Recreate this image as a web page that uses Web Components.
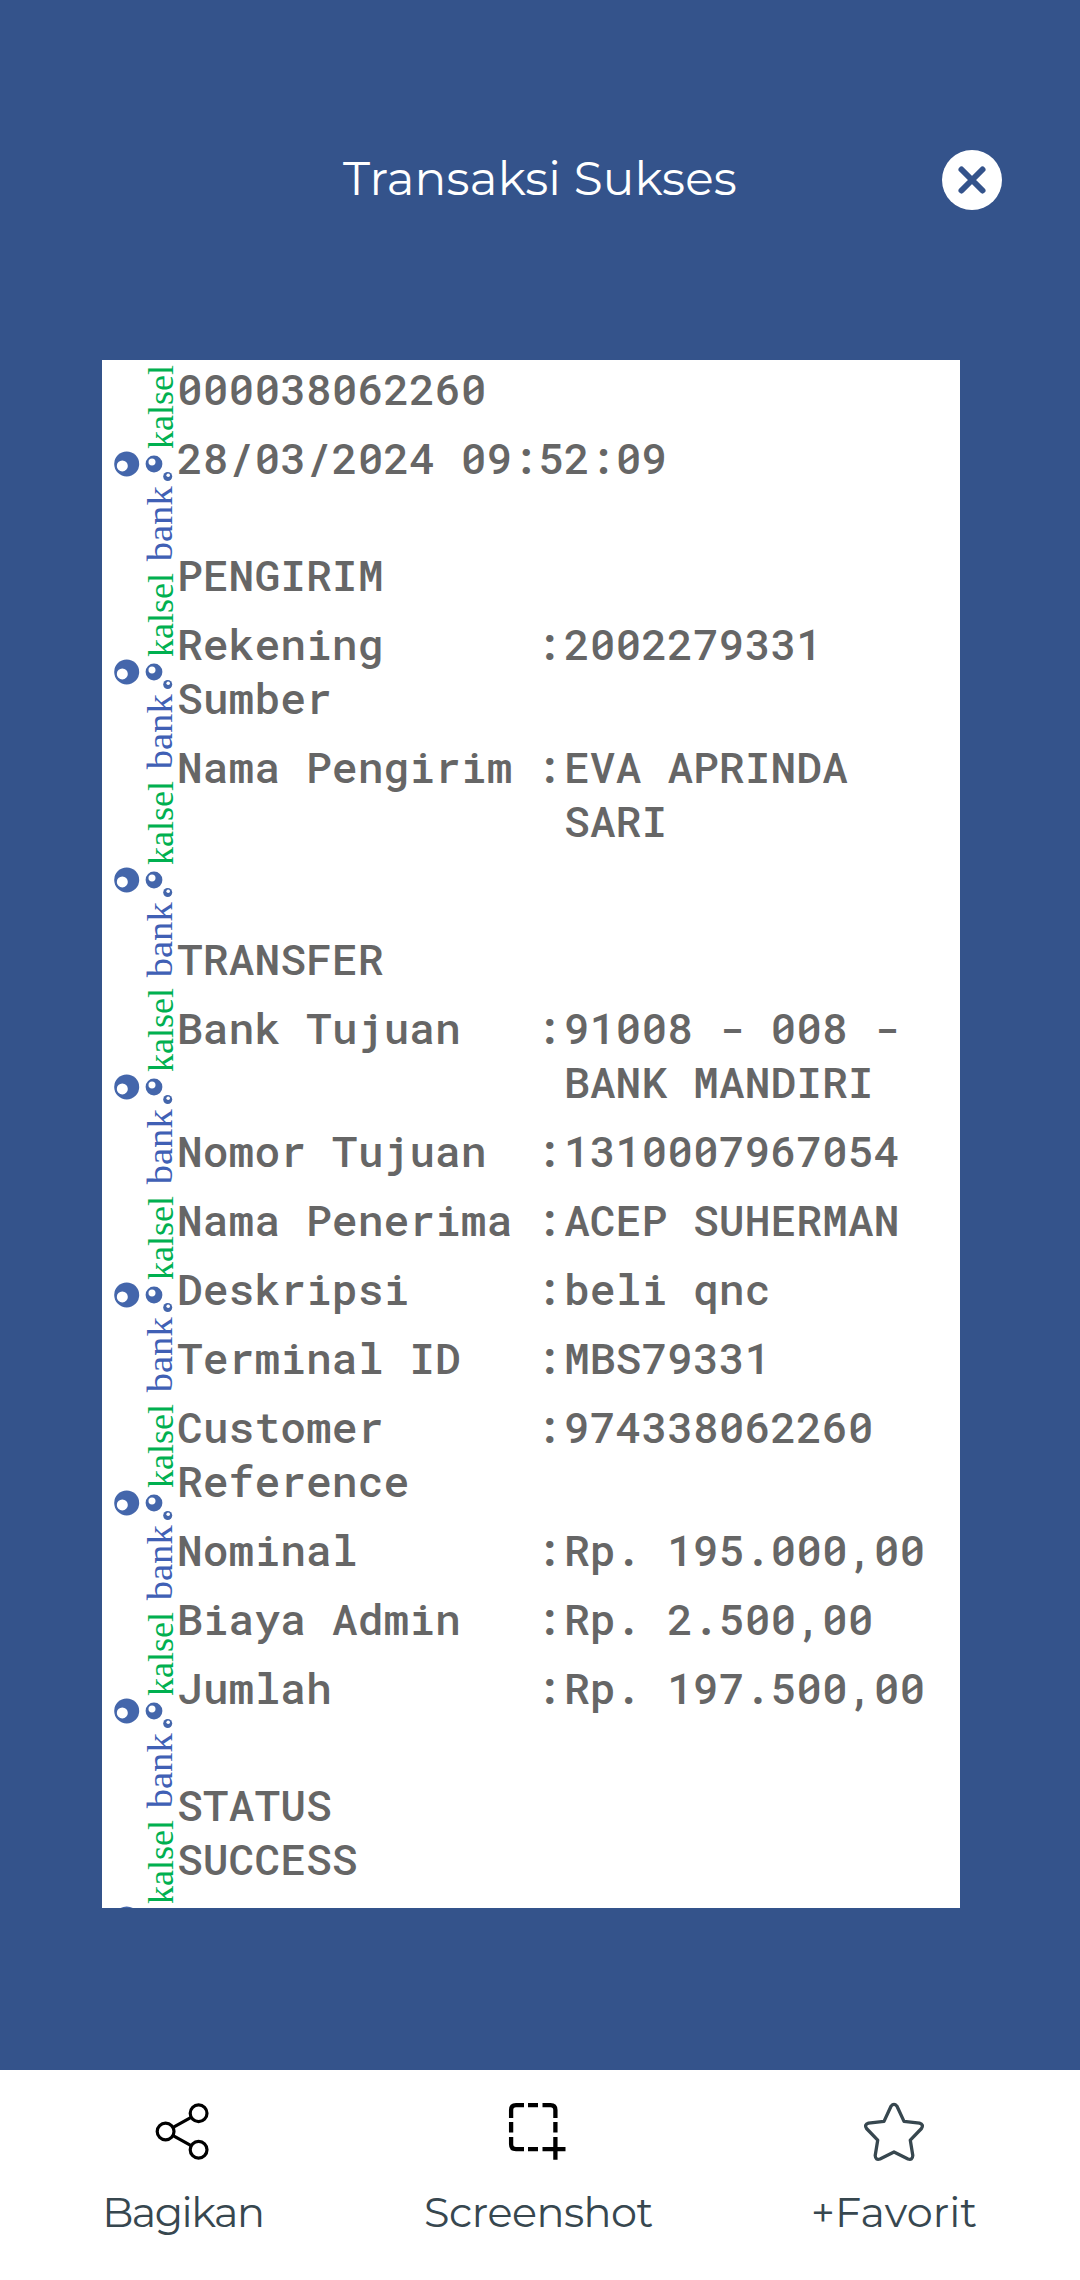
<!DOCTYPE html>
<html lang="id">
<head>
<meta charset="utf-8">
<title>Transaksi Sukses</title>
<style>
    body {
        margin: 0;
        background: #34538b;
        font-family: Montserrat, Inter, sans-serif;
    }
</style>
</head>
<body>
<receipt-screen>
    <screen-header slot="header">Transaksi Sukses</screen-header>
    <receipt-card>
        <receipt-line>000038062260</receipt-line>
        <receipt-line>28/03/2024 09:52:09</receipt-line>
        <receipt-line class="section">PENGIRIM</receipt-line>
        <receipt-row label="Rekening Sumber">2002279331</receipt-row>
        <receipt-row label="Nama Pengirim">EVA APRINDA SARI</receipt-row>
        <receipt-line class="section wide">TRANSFER</receipt-line>
        <receipt-row label="Bank Tujuan">91008 - 008 - BANK MANDIRI</receipt-row>
        <receipt-row label="Nomor Tujuan">1310007967054</receipt-row>
        <receipt-row label="Nama Penerima">ACEP SUHERMAN</receipt-row>
        <receipt-row label="Deskripsi">beli qnc</receipt-row>
        <receipt-row label="Terminal ID">MBS79331</receipt-row>
        <receipt-row label="Customer Reference">974338062260</receipt-row>
        <receipt-row label="Nominal">Rp. 195.000,00</receipt-row>
        <receipt-row label="Biaya Admin">Rp. 2.500,00</receipt-row>
        <receipt-row label="Jumlah">Rp. 197.500,00</receipt-row>
        <receipt-line class="section">STATUS<br>SUCCESS</receipt-line>
    </receipt-card>
    <action-bar slot="footer">
        <action-button style="--spacing: -1.5px">
            <svg slot="icon" width="60" height="60" viewBox="0 0 60 60" fill="none" stroke="#000" stroke-width="3.2">
                <circle cx="12.600" cy="30.500" r="8.400"/>
                <circle cx="45.600" cy="12.300" r="8.400"/>
                <circle cx="45.600" cy="48.700" r="8.400"/>
                <path d="M20.100 26.400 38.100 16.400M20.100 34.600 38.100 44.600"/>
            </svg>
            Bagikan
        </action-button>
        <action-button style="--spacing: -0.5px">
            <svg slot="icon" width="60" height="60" viewBox="0 0 60 60" fill="none" stroke="#000" stroke-width="4.3">
                <path d="M3.100 17V9q0-4.900 4.900-4.900h8M20 4.100h10M34.500 4.100h8q4.900 0 4.900 4.900v8M47.400 21v10.500M3.100 21v10.500M3.100 36v7.200q0 4.900 4.900 4.900h8M20 48.100h10M34.500 48.100h23M47.400 36v22.700"/>
            </svg>
            Screenshot
        </action-button>
        <action-button style="--spacing: 0.2px">
            <svg slot="icon" width="62" height="60" viewBox="0 0 62 60" fill="none" stroke="#37474f" stroke-width="3.3" stroke-linejoin="round">
                <path d="M28 5.200Q31 1.500 34 5.200L41 20.400 56.500 22.200Q61 23.500 58.500 27.500L47.300 39.200 49.800 54.500Q49.500 59.500 45 58L31 51 17 58Q12.500 59.500 12.200 54.500L14.700 39.200 3.500 27.500Q1 23.500 5.500 22.200L21 20.400Z"/>
            </svg>
            +Favorit
        </action-button>
    </action-bar>
</receipt-screen>

<script>
const screen_template = document.createElement("template");
screen_template.innerHTML = `
    <style>
        :host {
            display: grid;
            grid-template-rows: 360px 1fr 210px;
            width: 1080px;
            height: 2280px;
            overflow: hidden;
        }

        main {
            padding: 0 120px 0 102px;
        }
    </style>
    <slot name="header"></slot>
    <main><slot></slot></main>
    <slot name="footer"></slot>
`;

const header_template = document.createElement("template");
header_template.innerHTML = `
    <style>
        :host {
            display: grid;
            grid-template-columns: 60px 1fr 60px;
            align-items: center;
            padding: 0 78px;
            color: #fff;
        }

        h1 {
            grid-column: 2;
            margin: 0;
            padding-bottom: 2px;
            font-size: 47px;
            font-weight: 400;
            line-height: 60px;
            letter-spacing: 0.2px;
            text-align: center;
            white-space: nowrap;
        }

        svg {
            display: block;
        }
    </style>
    <h1><slot></slot></h1>
    <svg width="60" height="60" viewBox="0 0 60 60">
        <circle cx="30" cy="30" r="30" fill="#fff"/>
        <path d="M19.500 19.500 40.500 40.500M40.500 19.500 19.500 40.500" stroke="#34538b" stroke-width="6" stroke-linecap="round"/>
    </svg>
`;

const card_template = document.createElement("template");
card_template.innerHTML = `
    <style>
        :host {
            display: grid;
            grid-template-columns: 75px 1fr;
            grid-template-rows: 1548px;
            height: 1548px;
            overflow: hidden;
            background: #fff;
        }

        .lines {
            padding-top: 2px;
            color: #666;
            font-family: "Roboto Mono", "DejaVu Sans Mono", monospace;
            font-size: 43px;
            font-weight: 500;
            line-height: 54px;
        }

        ::slotted(.section) {
            margin-top: 48px;
        }

        ::slotted(.wide) {
            margin-top: 69px;
        }
    </style>
    <div class="marks"></div>
    <div class="lines"><slot></slot></div>
`;

const mark_template = document.createElement("template");
mark_template.innerHTML = `
    <style>
        :host {
            display: block;
            height: 207.8px;
        }

        svg {
            display: block;
            overflow: visible;
        }

        text {
            font-family: "Liberation Serif", serif;
            font-size: 36px;
        }
    </style>
    <svg width="82" height="207.8" viewBox="0 0 82 207.8">
        <g fill="#4466ab">
            <circle cx="24.700" cy="103.900" r="12.500"/>
            <circle cx="52" cy="104" r="8.400"/>
            <circle cx="65.700" cy="116.500" r="4.500"/>
        </g>
        <g fill="#fff">
            <circle cx="20.300" cy="105.900" r="5.500"/>
            <circle cx="50" cy="101.900" r="3.500"/>
            <circle cx="66.200" cy="115.200" r="1.800"/>
        </g>
        <text transform="translate(70.800 88.900) rotate(-90)" fill="#00b050" textLength="84">kalsel</text>
        <text class="bank" transform="translate(70.300 201.300) rotate(-90)" fill="#4060b5" textLength="75" lengthAdjust="spacingAndGlyphs">bank</text>
    </svg>
`;

const line_template = document.createElement("template");
line_template.innerHTML = `
    <style>
        :host {
            display: block;
            padding-bottom: 15px;
        }
    </style>
    <slot></slot>
`;

const row_template = document.createElement("template");
row_template.innerHTML = `
    <style>
        :host {
            display: grid;
            grid-template-columns: 360px 27px 366px;
            padding-bottom: 15px;
        }

        .colon {
            margin-left: -1px;
        }
    </style>
    <span id="label"></span>
    <span class="colon">:</span>
    <span><slot></slot></span>
`;

const bar_template = document.createElement("template");
bar_template.innerHTML = `
    <style>
        :host {
            display: grid;
            grid-template-columns: repeat(3, 1fr);
            padding: 31px 8px 0 5px;
            background: #fff;
            color: #37474f;
        }
    </style>
    <slot></slot>
`;

const button_template = document.createElement("template");
button_template.innerHTML = `
    <style>
        :host {
            display: flex;
            flex-direction: column;
            align-items: center;
            gap: 26px;
        }

        span {
            font-size: 41.4px;
            line-height: 50px;
            letter-spacing: var(--spacing, 0);
            white-space: nowrap;
        }
    </style>
    <slot name="icon"></slot>
    <span><slot></slot></span>
`;

class TemplateElement extends HTMLElement {

    constructor(template) {
        super();
        this.attachShadow({mode: 'open'});
        this.shadowRoot.appendChild(template.content.cloneNode(true));
    }

}

class ReceiptScreen extends TemplateElement {
    constructor() { super(screen_template); }
}

class ScreenHeader extends TemplateElement {
    constructor() { super(header_template); }
}

class BankMark extends TemplateElement {

    constructor() { super(mark_template); }

    connectedCallback() {
        // the last mark is cut off by the card edge before the second word
        if (this.hasAttribute("short")) {
            this.shadowRoot.querySelector(".bank").remove();
        }
    }

}

class ReceiptCard extends TemplateElement {

    constructor() {
        super(card_template);
        this.$marks = this.shadowRoot.querySelector(".marks");
        for (let i = 0; i < 8; i++) {
            const mark = document.createElement("bank-mark");
            if (i === 7) mark.setAttribute("short", "");
            this.$marks.appendChild(mark);
        }
    }

}

class ReceiptLine extends TemplateElement {
    constructor() { super(line_template); }
}

class ReceiptRow extends TemplateElement {

    constructor() { super(row_template); }

    connectedCallback() {
        this.shadowRoot.querySelector("#label").textContent = this.getAttribute("label");
    }

}

class ActionBar extends TemplateElement {
    constructor() { super(bar_template); }
}

class ActionButton extends TemplateElement {
    constructor() { super(button_template); }
}

customElements.define('bank-mark', BankMark);
customElements.define('receipt-screen', ReceiptScreen);
customElements.define('screen-header', ScreenHeader);
customElements.define('receipt-card', ReceiptCard);
customElements.define('receipt-line', ReceiptLine);
customElements.define('receipt-row', ReceiptRow);
customElements.define('action-bar', ActionBar);
customElements.define('action-button', ActionButton);
</script>
</body>
</html>
